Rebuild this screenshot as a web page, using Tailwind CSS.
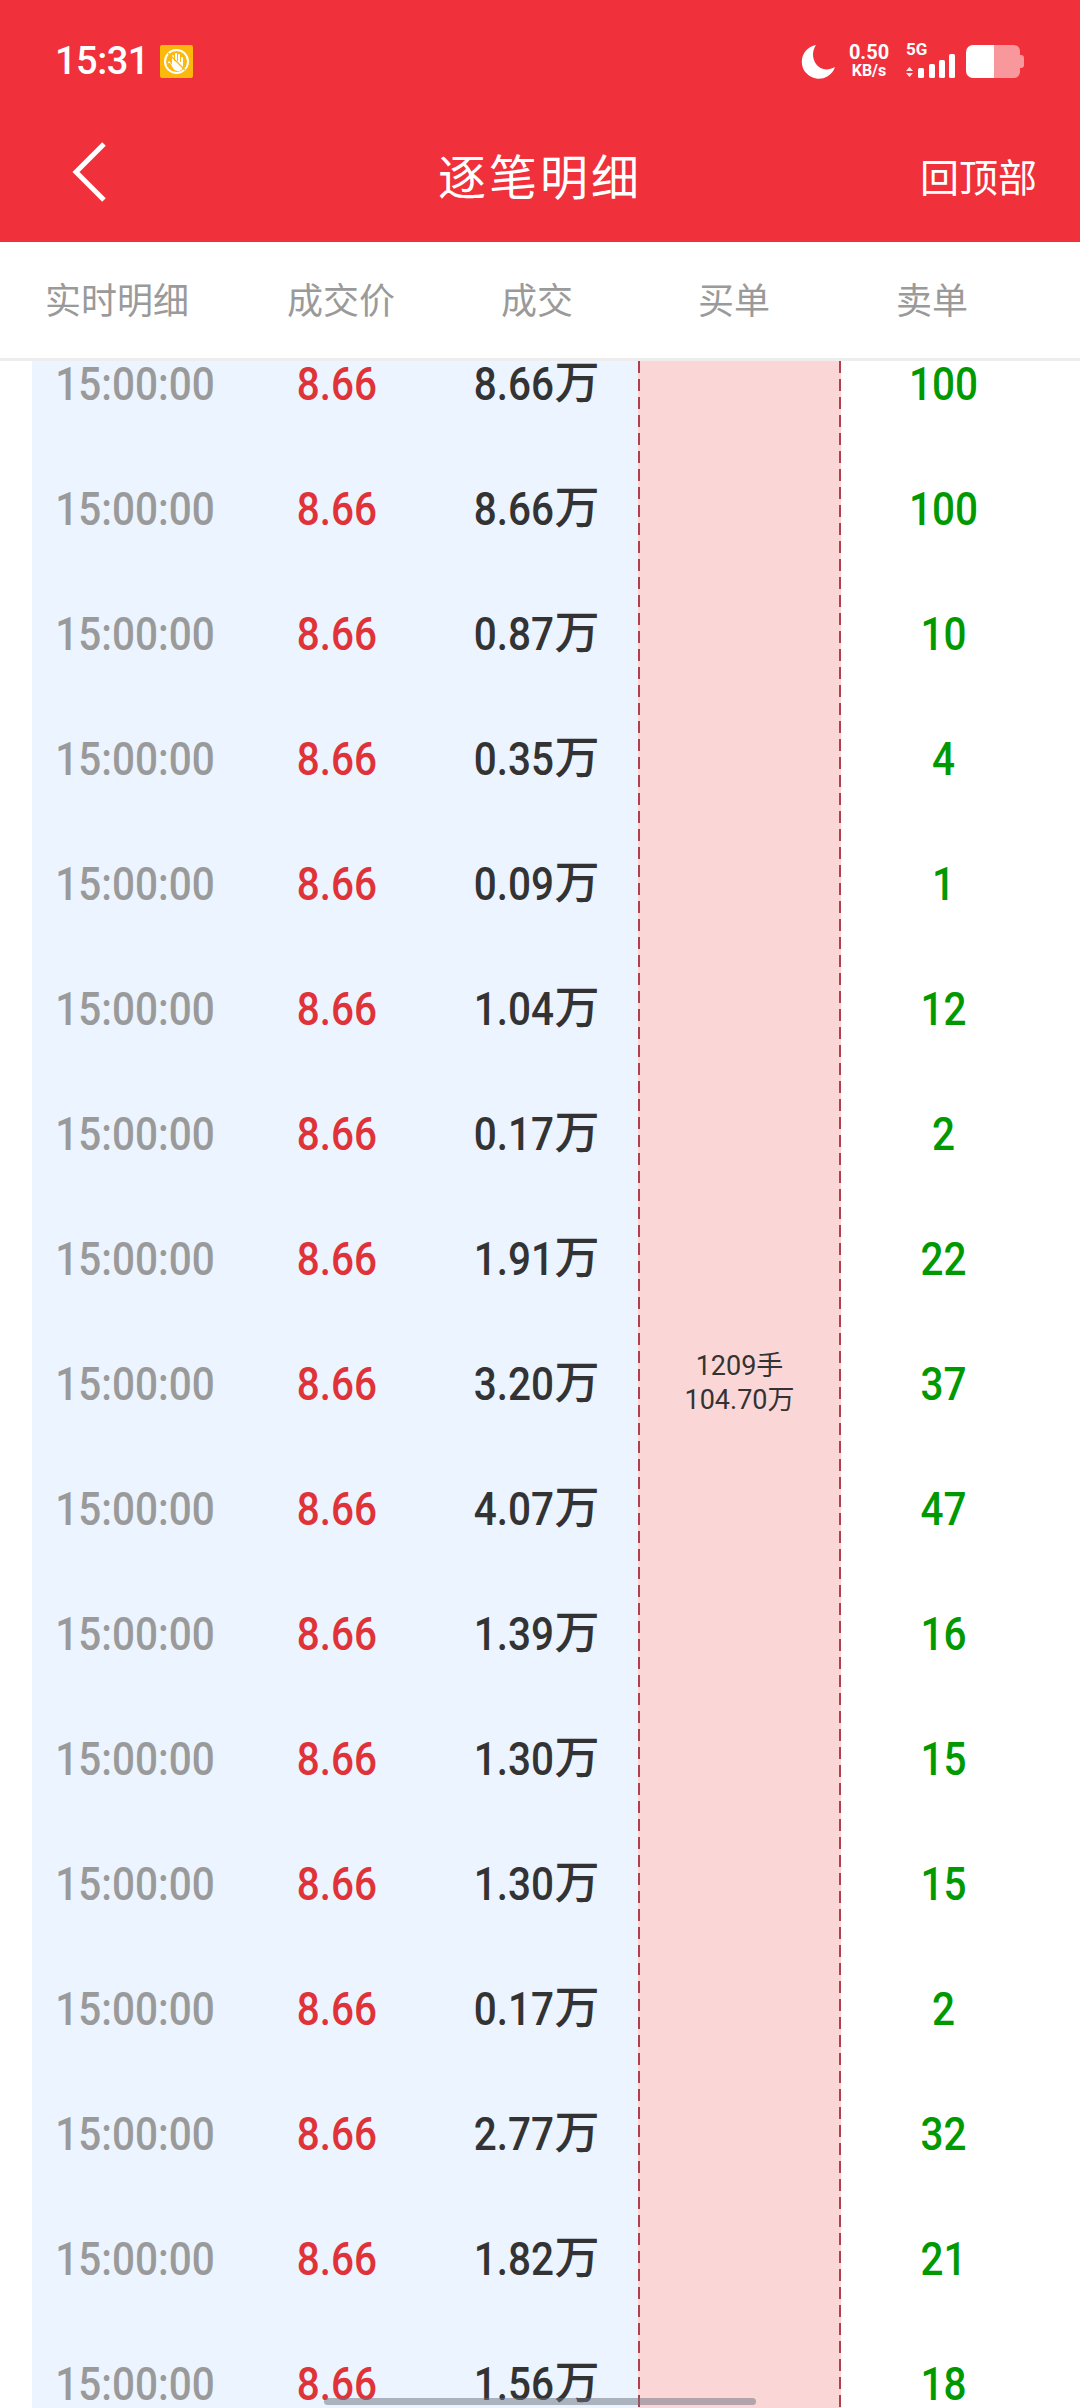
<!DOCTYPE html>
<html lang="zh">
<head>
<meta charset="utf-8">
<script src="https://cdn.jsdelivr.net/npm/@tailwindcss/browser@4"></script>
</head>
<body class="m-0 bg-white">
<div class="relative w-[1080px] h-[2408px] overflow-hidden flex flex-col bg-white font-['Roboto','Noto_Sans_CJK_SC',sans-serif]">
  <header class="bg-[#f0303a] text-white shrink-0 h-[242px]">
    <div class="h-[114px] pt-[8px] flex items-center justify-between pl-[55px] pr-[56px]">
      <div class="flex items-center gap-[11px]">
        <span class="text-[38px] leading-none font-medium tracking-[-0.5px]">15:31</span>
        <svg width="33" height="33" viewBox="0 0 33 33"><rect width="33" height="33" rx="2" fill="#fdb90b"/><circle cx="16.5" cy="16.5" r="11.5" fill="none" stroke="#fff" stroke-width="2"/><path d="M10 18l3 5c1 2 3 3 5 3 3 0 5-2 5-5v-8a1 1 0 0 0-2 0v4h-1V10a1 1 0 0 0-2 0v6h-1V9a1 1 0 0 0-2 0v7h-1v-5a1 1 0 0 0-2 0v9l-2-3a1 1 0 0 0-2 1z" fill="#fff"/><path d="M8 8l17 17" stroke="#fdb90b" stroke-width="1.2"/></svg>
      </div>
      <div class="flex items-center">
        <svg width="35" height="35" viewBox="0 0 35 35" class="mr-[12px]"><path d="M15 1A17 17 0 1 0 34 23C27 27 19 26 15 20 11 14 11 7 15 1Z" fill="#fff"/></svg>
        <div class="flex flex-col items-center w-[42px] mr-[16px] font-bold">
          <span class="text-[20px] leading-[20px]">0.50</span>
          <span class="text-[16px] leading-[18px]">KB/s</span>
        </div>
        <div class="flex flex-col w-[50px] mr-[9px] h-[34px] relative">
          <span class="text-[17px] leading-[14px] font-bold -mt-[2px]">5G</span>
          <svg width="50" height="24" viewBox="0 0 50 24" class="absolute left-0 top-[10px]"><path d="M3.500 13L7 17H0zM3.500 23L0 19h7z" fill="#fff" opacity=".9"/><rect x="12" y="14" width="6" height="10" rx="1.500" fill="#fff"/><rect x="23" y="10" width="6" height="14" rx="1.500" fill="#fff"/><rect x="33" y="6" width="6" height="18" rx="1.500" fill="#fff"/><rect x="43" y="0" width="6" height="24" rx="1.500" fill="#fff"/></svg>
        </div>
        <svg width="59" height="33" viewBox="0 0 59 33"><path d="M8 0H29V33H8a7 7 0 0 1-7-7V7a7 7 0 0 1 7-7z" fill="#fff"/><path d="M29 0H49a6 6 0 0 1 6 6V10h1a3 3 0 0 1 3 3v7a3 3 0 0 1-3 3h-1v4a6 6 0 0 1-6 6H29z" fill="#f8979c"/></svg>
      </div>
    </div>
    <div class="relative h-[128px] flex items-center justify-center pb-[8px]">
      <svg width="40" height="62" viewBox="0 0 40 62" class="absolute left-[71px] top-[27px]"><path d="M33 3L5 31l28 28" fill="none" stroke="#fff" stroke-width="5"/></svg>
      <h1 class="text-[48px] leading-none font-normal tracking-[3px] font-['Noto_Sans_CJK_SC',sans-serif]">逐笔明细</h1>
      <span class="absolute right-[43px] top-[42px] text-[39px] leading-none font-['Noto_Sans_CJK_SC',sans-serif]">回顶部</span>
    </div>
  </header>
  <div class="shrink-0 h-[119px] pb-[5px] border-b-[3px] border-[#ededed] grid grid-cols-[234px_214px_178px_216px_180px] items-center text-center text-[36px] leading-none text-[#9a9a9a] font-['Noto_Sans_CJK_SC',sans-serif]">
    <span>实时明细</span><span>成交价</span><span>成交</span><span>买单</span><span>卖单</span>
  </div>
  <main class="flex-1 min-h-0 overflow-hidden pl-[32px] flex text-[46px] leading-none font-medium">
    <div class="w-[606px] bg-[#ebf4ff] shrink-0 overflow-hidden">
      <div class="-mt-[40px]">
        <div class="h-[125px] grid grid-cols-[206px_198px_202px] items-center text-center"><span class="scale-x-[.88] text-[#9a9a9a]">15:00:00</span><span class="scale-x-[.88] text-[#e03339]">8.66</span><span class="flex justify-center text-[#333]"><b class="font-medium w-[80px] scale-x-[.88] whitespace-nowrap flex justify-center">8.66</b><i class="not-italic text-[45px] leading-[46px]">万</i></span></div>
        <div class="h-[125px] grid grid-cols-[206px_198px_202px] items-center text-center"><span class="scale-x-[.88] text-[#9a9a9a]">15:00:00</span><span class="scale-x-[.88] text-[#e03339]">8.66</span><span class="flex justify-center text-[#333]"><b class="font-medium w-[80px] scale-x-[.88] whitespace-nowrap flex justify-center">8.66</b><i class="not-italic text-[45px] leading-[46px]">万</i></span></div>
        <div class="h-[125px] grid grid-cols-[206px_198px_202px] items-center text-center"><span class="scale-x-[.88] text-[#9a9a9a]">15:00:00</span><span class="scale-x-[.88] text-[#e03339]">8.66</span><span class="flex justify-center text-[#333]"><b class="font-medium w-[80px] scale-x-[.88] whitespace-nowrap flex justify-center">0.87</b><i class="not-italic text-[45px] leading-[46px]">万</i></span></div>
        <div class="h-[125px] grid grid-cols-[206px_198px_202px] items-center text-center"><span class="scale-x-[.88] text-[#9a9a9a]">15:00:00</span><span class="scale-x-[.88] text-[#e03339]">8.66</span><span class="flex justify-center text-[#333]"><b class="font-medium w-[80px] scale-x-[.88] whitespace-nowrap flex justify-center">0.35</b><i class="not-italic text-[45px] leading-[46px]">万</i></span></div>
        <div class="h-[125px] grid grid-cols-[206px_198px_202px] items-center text-center"><span class="scale-x-[.88] text-[#9a9a9a]">15:00:00</span><span class="scale-x-[.88] text-[#e03339]">8.66</span><span class="flex justify-center text-[#333]"><b class="font-medium w-[80px] scale-x-[.88] whitespace-nowrap flex justify-center">0.09</b><i class="not-italic text-[45px] leading-[46px]">万</i></span></div>
        <div class="h-[125px] grid grid-cols-[206px_198px_202px] items-center text-center"><span class="scale-x-[.88] text-[#9a9a9a]">15:00:00</span><span class="scale-x-[.88] text-[#e03339]">8.66</span><span class="flex justify-center text-[#333]"><b class="font-medium w-[80px] scale-x-[.88] whitespace-nowrap flex justify-center">1.04</b><i class="not-italic text-[45px] leading-[46px]">万</i></span></div>
        <div class="h-[125px] grid grid-cols-[206px_198px_202px] items-center text-center"><span class="scale-x-[.88] text-[#9a9a9a]">15:00:00</span><span class="scale-x-[.88] text-[#e03339]">8.66</span><span class="flex justify-center text-[#333]"><b class="font-medium w-[80px] scale-x-[.88] whitespace-nowrap flex justify-center">0.17</b><i class="not-italic text-[45px] leading-[46px]">万</i></span></div>
        <div class="h-[125px] grid grid-cols-[206px_198px_202px] items-center text-center"><span class="scale-x-[.88] text-[#9a9a9a]">15:00:00</span><span class="scale-x-[.88] text-[#e03339]">8.66</span><span class="flex justify-center text-[#333]"><b class="font-medium w-[80px] scale-x-[.88] whitespace-nowrap flex justify-center">1.91</b><i class="not-italic text-[45px] leading-[46px]">万</i></span></div>
        <div class="h-[125px] grid grid-cols-[206px_198px_202px] items-center text-center"><span class="scale-x-[.88] text-[#9a9a9a]">15:00:00</span><span class="scale-x-[.88] text-[#e03339]">8.66</span><span class="flex justify-center text-[#333]"><b class="font-medium w-[80px] scale-x-[.88] whitespace-nowrap flex justify-center">3.20</b><i class="not-italic text-[45px] leading-[46px]">万</i></span></div>
        <div class="h-[125px] grid grid-cols-[206px_198px_202px] items-center text-center"><span class="scale-x-[.88] text-[#9a9a9a]">15:00:00</span><span class="scale-x-[.88] text-[#e03339]">8.66</span><span class="flex justify-center text-[#333]"><b class="font-medium w-[80px] scale-x-[.88] whitespace-nowrap flex justify-center">4.07</b><i class="not-italic text-[45px] leading-[46px]">万</i></span></div>
        <div class="h-[125px] grid grid-cols-[206px_198px_202px] items-center text-center"><span class="scale-x-[.88] text-[#9a9a9a]">15:00:00</span><span class="scale-x-[.88] text-[#e03339]">8.66</span><span class="flex justify-center text-[#333]"><b class="font-medium w-[80px] scale-x-[.88] whitespace-nowrap flex justify-center">1.39</b><i class="not-italic text-[45px] leading-[46px]">万</i></span></div>
        <div class="h-[125px] grid grid-cols-[206px_198px_202px] items-center text-center"><span class="scale-x-[.88] text-[#9a9a9a]">15:00:00</span><span class="scale-x-[.88] text-[#e03339]">8.66</span><span class="flex justify-center text-[#333]"><b class="font-medium w-[80px] scale-x-[.88] whitespace-nowrap flex justify-center">1.30</b><i class="not-italic text-[45px] leading-[46px]">万</i></span></div>
        <div class="h-[125px] grid grid-cols-[206px_198px_202px] items-center text-center"><span class="scale-x-[.88] text-[#9a9a9a]">15:00:00</span><span class="scale-x-[.88] text-[#e03339]">8.66</span><span class="flex justify-center text-[#333]"><b class="font-medium w-[80px] scale-x-[.88] whitespace-nowrap flex justify-center">1.30</b><i class="not-italic text-[45px] leading-[46px]">万</i></span></div>
        <div class="h-[125px] grid grid-cols-[206px_198px_202px] items-center text-center"><span class="scale-x-[.88] text-[#9a9a9a]">15:00:00</span><span class="scale-x-[.88] text-[#e03339]">8.66</span><span class="flex justify-center text-[#333]"><b class="font-medium w-[80px] scale-x-[.88] whitespace-nowrap flex justify-center">0.17</b><i class="not-italic text-[45px] leading-[46px]">万</i></span></div>
        <div class="h-[125px] grid grid-cols-[206px_198px_202px] items-center text-center"><span class="scale-x-[.88] text-[#9a9a9a]">15:00:00</span><span class="scale-x-[.88] text-[#e03339]">8.66</span><span class="flex justify-center text-[#333]"><b class="font-medium w-[80px] scale-x-[.88] whitespace-nowrap flex justify-center">2.77</b><i class="not-italic text-[45px] leading-[46px]">万</i></span></div>
        <div class="h-[125px] grid grid-cols-[206px_198px_202px] items-center text-center"><span class="scale-x-[.88] text-[#9a9a9a]">15:00:00</span><span class="scale-x-[.88] text-[#e03339]">8.66</span><span class="flex justify-center text-[#333]"><b class="font-medium w-[80px] scale-x-[.88] whitespace-nowrap flex justify-center">1.82</b><i class="not-italic text-[45px] leading-[46px]">万</i></span></div>
        <div class="h-[125px] grid grid-cols-[206px_198px_202px] items-center text-center"><span class="scale-x-[.88] text-[#9a9a9a]">15:00:00</span><span class="scale-x-[.88] text-[#e03339]">8.66</span><span class="flex justify-center text-[#333]"><b class="font-medium w-[80px] scale-x-[.88] whitespace-nowrap flex justify-center">1.56</b><i class="not-italic text-[45px] leading-[46px]">万</i></span></div>
      </div>
    </div>
    <div class="w-[203px] shrink-0 flex bg-[#fbd6d7] font-normal">
      <div class="w-[2px] h-full bg-[repeating-linear-gradient(to_bottom,#b0404c_0_12px,transparent_12px_18px)]"></div>
      <div class="flex-1 pt-[988px] text-center text-[27px] leading-[34px] text-[#333]">
        <p>1209手</p>
        <p>104.70万</p>
      </div>
      <div class="w-[2px] h-full bg-[repeating-linear-gradient(to_bottom,#b0404c_0_12px,transparent_12px_18px)]"></div>
    </div>
    <div class="flex-1 overflow-hidden text-[#009900] pr-[34px]">
      <div class="-mt-[40px] text-center">
        <div class="h-[125px] flex items-center justify-center scale-x-[.88]">100</div>
        <div class="h-[125px] flex items-center justify-center scale-x-[.88]">100</div>
        <div class="h-[125px] flex items-center justify-center scale-x-[.88]">10</div>
        <div class="h-[125px] flex items-center justify-center scale-x-[.88]">4</div>
        <div class="h-[125px] flex items-center justify-center scale-x-[.88]">1</div>
        <div class="h-[125px] flex items-center justify-center scale-x-[.88]">12</div>
        <div class="h-[125px] flex items-center justify-center scale-x-[.88]">2</div>
        <div class="h-[125px] flex items-center justify-center scale-x-[.88]">22</div>
        <div class="h-[125px] flex items-center justify-center scale-x-[.88]">37</div>
        <div class="h-[125px] flex items-center justify-center scale-x-[.88]">47</div>
        <div class="h-[125px] flex items-center justify-center scale-x-[.88]">16</div>
        <div class="h-[125px] flex items-center justify-center scale-x-[.88]">15</div>
        <div class="h-[125px] flex items-center justify-center scale-x-[.88]">15</div>
        <div class="h-[125px] flex items-center justify-center scale-x-[.88]">2</div>
        <div class="h-[125px] flex items-center justify-center scale-x-[.88]">32</div>
        <div class="h-[125px] flex items-center justify-center scale-x-[.88]">21</div>
        <div class="h-[125px] flex items-center justify-center scale-x-[.88]">18</div>
      </div>
    </div>
  </main>
  <div class="absolute left-[324px] top-[2398px] w-[432px] h-[7px] rounded-full bg-[#6b7280]/50"></div>
</div>
</body>
</html>
